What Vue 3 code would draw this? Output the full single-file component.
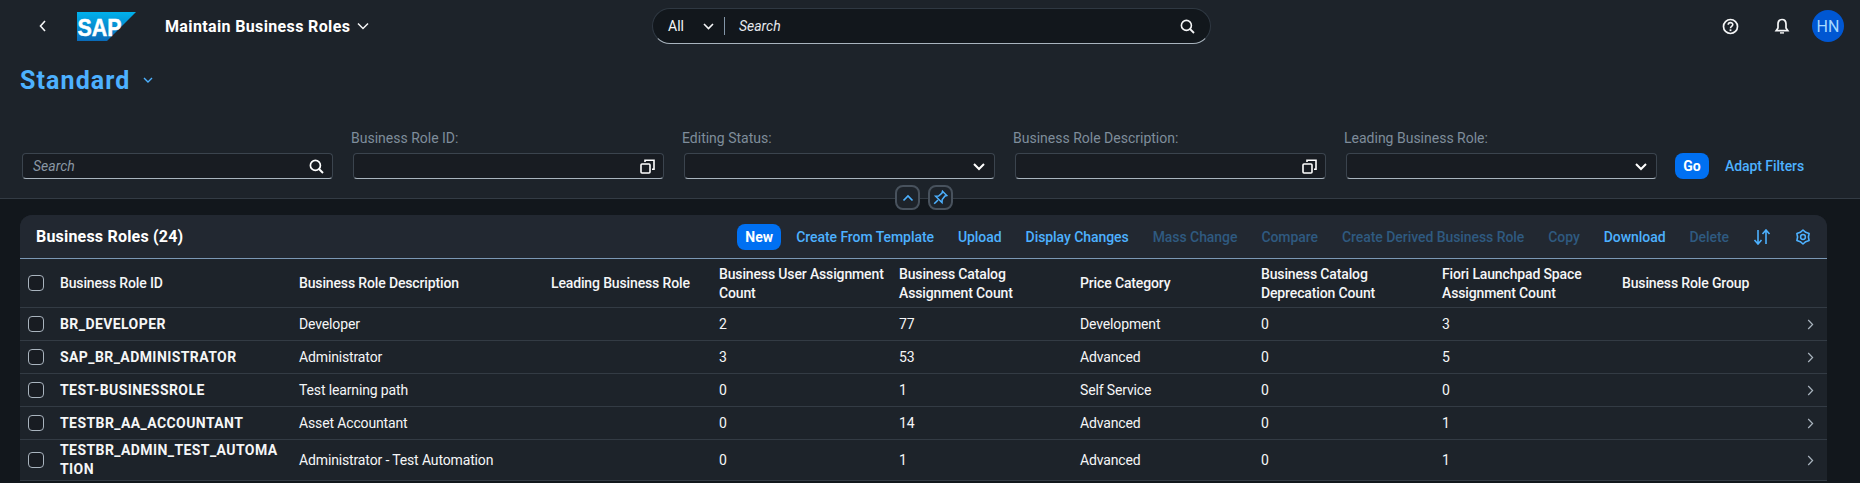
<template>
  <div class="page">
    <header class="shell">
      <div class="shell-left">
        <button class="icon-btn back" title="Back">
          <svg width="9" height="14" viewBox="0 0 9 14"><path d="M7 2 2.5 7 7 12" fill="none" stroke="currentColor" stroke-width="1.6" /></svg>
        </button>
        <svg class="logo" width="59" height="29" viewBox="0 0 59 29">
          <defs>
            <linearGradient id="sapBlue" x1="0" y1="0" x2="0" y2="1">
              <stop offset="0" stop-color="#00b1eb" />
              <stop offset="1" stop-color="#0a6ab8" />
            </linearGradient>
          </defs>
          <polygon points="0,0 59,0 30,29 0,29" fill="url(#sapBlue)" />
          <text x="0.5" y="24" class="logo-text" textLength="44" lengthAdjust="spacingAndGlyphs">SAP</text>
        </svg>
        <span class="app-title">Maintain Business Roles</span>
        <svg class="title-chev" width="12" height="8" viewBox="0 0 12 8"><path d="M1 1.5 6 6.5 11 1.5" fill="none" stroke="currentColor" stroke-width="1.5" /></svg>
      </div>
      <div class="shell-search">
        <span class="scope">All</span>
        <svg class="scope-chev" width="11" height="7" viewBox="0 0 11 7"><path d="M1 1 5.5 5.5 10 1" fill="none" stroke="currentColor" stroke-width="1.6" /></svg>
        <span class="scope-sep"></span>
        <span class="search-ph">Search</span>
        <svg class="search-icon" width="15" height="15" viewBox="0 0 15 15"><circle cx="6.4" cy="6.4" r="5" fill="none" stroke="currentColor" stroke-width="1.6" /><path d="M10 10 14 14" stroke="currentColor" stroke-width="1.8" /></svg>
      </div>
      <div class="shell-right">
        <svg class="help" width="17" height="17" viewBox="0 0 17 17">
          <circle cx="8.5" cy="8.5" r="7" fill="none" stroke="currentColor" stroke-width="1.7" />
          <path d="M6.2 6.8C6.2 3.9 10.8 3.9 10.8 6.6 10.8 8.4 8.5 8.4 8.5 10.2" fill="none" stroke="currentColor" stroke-width="1.6" />
          <rect x="7.6" y="11.3" width="1.8" height="1.8" fill="currentColor" />
        </svg>
        <svg class="bell" width="16" height="17" viewBox="0 0 16 17">
          <path d="M8 1.5C5.2 1.5 4 3.6 4 6V10L2.2 12.6H13.8L12 10V6C12 3.6 10.8 1.5 8 1.5Z" fill="none" stroke="currentColor" stroke-width="1.7" />
          <path d="M6 14.2H10V15.6H6Z" fill="currentColor" />
        </svg>
        <span class="avatar">HN</span>
      </div>
    </header>

    <section class="title-area">
      <div class="variant">
        <span class="variant-name">Standard</span>
        <svg width="10" height="7" viewBox="0 0 10 7"><path d="M1 1 5 5 9 1" fill="none" stroke="currentColor" stroke-width="1.4" /></svg>
      </div>
      <div class="filters">
        <div class="filter">
          <label class="filter-label"></label>
          <div class="field">
            <span class="field-ph">Search</span>
            <svg class="field-icon" width="15" height="15" viewBox="0 0 15 15"><circle cx="6.4" cy="6.4" r="5" fill="none" stroke="currentColor" stroke-width="1.7" /><path d="M10 10 14 14" stroke="currentColor" stroke-width="2" /></svg>
          </div>
        </div>
        <div class="filter" v-for="f in filters" :key="f.label">
          <label class="filter-label">{{ f.label }}</label>
          <div class="field">
            <svg v-if="f.type === 'value'" class="field-icon" width="15" height="15" viewBox="0 0 15 15">
              <rect x="1" y="5" width="9" height="9" rx="1" fill="none" stroke="currentColor" stroke-width="1.6" />
              <path d="M5 3V1.2H14V10.2H12" fill="none" stroke="currentColor" stroke-width="1.6" />
            </svg>
            <svg v-else class="field-icon" width="14" height="9" viewBox="0 0 14 9"><path d="M2 2 7 7 12 2" fill="none" stroke="currentColor" stroke-width="2" /></svg>
          </div>
        </div>
        <button class="btn-primary go">Go</button>
        <a class="link adapt">Adapt Filters</a>
      </div>
      <div class="collapse-btns">
        <button class="round-btn">
          <svg width="12" height="8" viewBox="0 0 12 8"><path d="M1.5 6.5 6 2 10.5 6.5" fill="none" stroke="currentColor" stroke-width="1.7" /></svg>
        </button>
        <button class="round-btn">
          <svg width="15" height="15" viewBox="0 0 15 15">
            <path d="M9.5 1.2 13.8 5.5 12 6 9.2 9.5 9 12.5 2.6 6.2 5.6 6 9 3Z" fill="none" stroke="currentColor" stroke-width="1.5" />
            <path d="M5 10 1.2 13.8" stroke="currentColor" stroke-width="1.6" />
          </svg>
        </button>
      </div>
    </section>

    <main class="content">
      <div class="panel">
        <div class="toolbar">
          <span class="table-title">Business Roles (24)</span>
          <div class="actions">
            <button class="btn-primary new">New</button>
            <a v-for="a in actions" :key="a.text" class="link" :class="{ disabled: a.disabled }">{{ a.text }}</a>
            <svg class="sort-icon" width="18" height="16" viewBox="0 0 18 16">
              <path d="M5 1V15M1.5 11 5 15 8.5 11" fill="none" stroke="currentColor" stroke-width="1.6" />
              <path d="M13 15V1M9.5 5 13 1 16.5 5" fill="none" stroke="currentColor" stroke-width="1.6" />
            </svg>
            <svg class="gear-icon" width="16" height="16" viewBox="0 0 16 16">
              <path d="M8 1 10.7 3.3 14.1 4.5 13.4 8 14.1 11.5 10.7 12.7 8 15 5.3 12.7 1.9 11.5 2.6 8 1.9 4.5 5.3 3.3Z" fill="none" stroke="currentColor" stroke-width="1.6" stroke-linejoin="round" />
              <circle cx="8" cy="8" r="2.4" fill="none" stroke="currentColor" stroke-width="1.5" />
            </svg>
          </div>
        </div>

        <div class="row head">
          <span class="check"></span>
          <span v-for="c in columns" :key="c" class="cell">{{ c }}</span>
          <span></span>
        </div>
        <div v-for="r in rows" :key="r.id" class="row" :class="{ tall: r.tall }">
          <span class="check"></span>
          <span class="cell id">{{ r.id }}</span>
          <span class="cell">{{ r.desc }}</span>
          <span class="cell"></span>
          <span class="cell">{{ r.users }}</span>
          <span class="cell">{{ r.catalogs }}</span>
          <span class="cell">{{ r.price }}</span>
          <span class="cell">{{ r.deprecated }}</span>
          <span class="cell">{{ r.spaces }}</span>
          <span class="cell"></span>
          <svg class="nav" width="7" height="11" viewBox="0 0 7 11"><path d="M1.2 1 5.6 5.5 1.2 10" fill="none" stroke="currentColor" stroke-width="1.2" /></svg>
        </div>
      </div>
    </main>
  </div>
</template>

<script setup>
const filters = [
  { label: "Business Role ID:", type: "value" },
  { label: "Editing Status:", type: "select" },
  { label: "Business Role Description:", type: "value" },
  { label: "Leading Business Role:", type: "select" },
];

const actions = [
  { text: "Create From Template" },
  { text: "Upload" },
  { text: "Display Changes" },
  { text: "Mass Change", disabled: true },
  { text: "Compare", disabled: true },
  { text: "Create Derived Business Role", disabled: true },
  { text: "Copy", disabled: true },
  { text: "Download" },
  { text: "Delete", disabled: true },
];

const columns = [
  "Business Role ID",
  "Business Role Description",
  "Leading Business Role",
  "Business User Assignment Count",
  "Business Catalog Assignment Count",
  "Price Category",
  "Business Catalog Deprecation Count",
  "Fiori Launchpad Space Assignment Count",
  "Business Role Group",
];

const rows = [
  { id: "BR_DEVELOPER", desc: "Developer", users: 2, catalogs: 77, price: "Development", deprecated: 0, spaces: 3 },
  { id: "SAP_BR_ADMINISTRATOR", desc: "Administrator", users: 3, catalogs: 53, price: "Advanced", deprecated: 0, spaces: 5 },
  { id: "TEST-BUSINESSROLE", desc: "Test learning path", users: 0, catalogs: 1, price: "Self Service", deprecated: 0, spaces: 0 },
  { id: "TESTBR_AA_ACCOUNTANT", desc: "Asset Accountant", users: 0, catalogs: 14, price: "Advanced", deprecated: 0, spaces: 1 },
  { id: "TESTBR_ADMIN_TEST_AUTOMATION", desc: "Administrator - Test Automation", users: 0, catalogs: 1, price: "Advanced", deprecated: 0, spaces: 1, tall: true },
];
</script>

<style>
html, body { margin: 0; background: #12171c; }
</style>

<style scoped>
.page {
  width: 1860px;
  height: 483px;
  overflow: hidden;
  background: #12171c;
  color: #f5f6f7;
  font-family: Roboto, "Liberation Sans", sans-serif;
  font-size: 14px;
}

button { font-family: inherit; border: none; padding: 0; background: none; color: inherit; }

.shell {
  height: 52px;
  display: flex;
  align-items: center;
  background: #1d232a;
}
.shell-left {
  width: 652px;
  display: flex;
  align-items: center;
}
.back { width: 9px; height: 14px; margin-left: 38px; display: flex; }
.logo { margin-left: 30px; }
.logo-text { font: 700 24px "Liberation Sans", sans-serif; fill: #fff; stroke: #fff; stroke-width: 0.5px; }
.app-title { margin-left: 29px; font-size: 16px; font-weight: 700; letter-spacing: 0.36px; color: #fff; }
.title-chev { margin-left: 7px; color: #f5f6f7; }

.shell-search {
  width: 559px;
  height: 36px;
  box-sizing: border-box;
  display: flex;
  align-items: center;
  background: #12171c;
  border: 1px solid #2f3842;
  border-bottom-color: #a9b4be;
  border-radius: 18px;
  padding: 0 15px;
}
.scope-chev { margin-left: 19px; }
.scope-sep { width: 1px; height: 18px; background: #8396a8; margin-left: 10px; }
.search-ph { margin-left: 14px; font-style: italic; color: #e6e9ec; }
.search-icon { margin-left: auto; }

.shell-right {
  flex: 1;
  display: flex;
  align-items: center;
  justify-content: flex-end;
  padding-right: 16px;
}
.help { margin-right: 35px; }
.bell { margin-right: 22px; }
.avatar {
  width: 32px;
  height: 32px;
  border-radius: 50%;
  background: #0057d2;
  color: #a6d9ff;
  font-size: 16px;
  display: flex;
  align-items: center;
  justify-content: center;
}

.title-area {
  position: relative;
  height: 147px;
  box-sizing: border-box;
  background: #1d232a;
  border-bottom: 1px solid #333b44;
  padding-left: 20px;
}
.variant {
  display: flex;
  align-items: center;
  height: 56px;
  color: #4db1ff;
}
.variant-name { font-size: 25px; font-weight: 700; letter-spacing: 1.1px; margin-right: 12px; }

.filters {
  display: flex;
  align-items: flex-end;
  gap: 20px;
  margin-left: 2px;
  margin-top: 21px;
}
.filter { width: 311px; display: flex; flex-direction: column; }
.filter-label { height: 24px; line-height: 18px; color: #7f8d9b; margin-left: -2px; }
.field {
  height: 26px;
  box-sizing: border-box;
  display: flex;
  align-items: center;
  justify-content: space-between;
  background: #181c22;
  border: 1px solid #3b444e;
  border-bottom-color: #a9b4be;
  border-radius: 4px;
  padding: 0 8px 0 10px;
}
.field-ph { font-style: italic; color: #8a97a4; }
.field-icon { margin-left: auto; color: #fff; }

.btn-primary {
  height: 26px;
  box-sizing: border-box;
  background: #0070f2;
  color: #fff;
  border-radius: 8px;
  font-size: 14px;
  font-weight: 700;
}
.go { width: 34px; margin-left: -2px; }
.adapt { align-self: flex-end; line-height: 26px; margin-left: -4px; }

.link { color: #4db1ff; font-weight: 500; white-space: nowrap; letter-spacing: -0.06px; }
.link.disabled { color: #2f5a80; }

.collapse-btns {
  position: absolute;
  left: 895px;
  top: 133px;
  display: flex;
  gap: 8px;
}
.round-btn {
  width: 25px;
  height: 25px;
  box-sizing: border-box;
  display: flex;
  align-items: center;
  justify-content: center;
  background: #1d232a;
  border: 2px solid #48525d;
  border-radius: 8px;
  color: #4db1ff;
}

.content { padding: 16px 33px 0 20px; }
.panel {
  background: #1d232a;
  border-radius: 12px 12px 0 0;
  overflow: hidden;
}
.toolbar {
  height: 44px;
  box-sizing: border-box;
  display: flex;
  align-items: center;
  background: #222831;
  border-bottom: 1px solid #7b98b5;
  padding: 0 16px 0 16px;
}
.table-title { font-size: 16px; font-weight: 700; letter-spacing: 0.2px; color: #fff; }
.actions {
  margin-left: auto;
  display: flex;
  align-items: center;
  gap: 24px;
}
.new { width: 44px; margin-right: -9px; }
.sort-icon, .gear-icon { color: #4db1ff; }

.row {
  display: grid;
  grid-template-columns: 40px 239px 252px 168px 180px 181px 181px 181px 180px 175px 1fr;
  align-items: center;
  height: 33px;
  box-sizing: border-box;
  border-bottom: 1px solid #333b44;
  color: #f5f6f7;
  letter-spacing: -0.14px;
}
.row.head { height: 49px; font-weight: 500; line-height: 19px; }
.row.head .cell { padding-top: 1px; }
.row.tall { height: 41px; line-height: 19px; }
.cell { padding-right: 12px; }
.cell.id {
  font-weight: 700;
  letter-spacing: 0.42px;
  word-break: break-all;
  padding-right: 17px;
}
.check {
  width: 16px;
  height: 16px;
  box-sizing: border-box;
  margin-left: 8px;
  border: 1px solid #a9b4be;
  border-radius: 4px;
  background: #181c22;
}
.nav { color: #a9b4be; justify-self: end; margin-right: 13px; }
</style>
